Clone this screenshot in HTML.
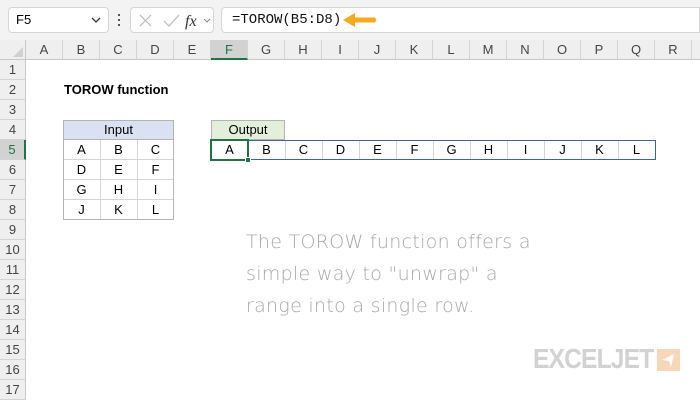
<!DOCTYPE html>
<html><head><meta charset="utf-8"><style>
*{margin:0;padding:0;box-sizing:border-box}
body{width:700px;height:400px;overflow:hidden;background:#fff;font-family:"Liberation Sans",sans-serif;position:relative}
.a{position:absolute}
.hdr{position:absolute;top:40px;height:20px;background:#efefef;border-right:1px solid #d4d4d4;border-bottom:1px solid #c8c8c8;font-size:13px;color:#444;text-align:center;line-height:20px}
.rh{position:absolute;left:0;width:26px;height:20px;background:#efefef;border-bottom:1px solid #d4d4d4;border-right:1px solid #c8c8c8;font-size:13px;color:#444;text-align:center;line-height:20px}
.c{position:absolute;height:20px;width:37px;font-size:13px;text-align:center;line-height:20px;color:#000}
</style></head><body>
<div class="a" style="left:0;top:0;width:700px;height:40px;background:#f3f3f3"></div>
<div class="a" style="left:8px;top:7px;width:101px;height:26px;background:#fff;border:1px solid #d6d6d6;border-radius:4px;font-size:13px;line-height:24px;padding-left:7px">F5</div>
<svg class="a" style="left:90px;top:15px" width="12" height="10"><path d="M2 3 L6 7 L10 3" stroke="#333" stroke-width="1.3" fill="none"/></svg>
<div class="a" style="left:118px;top:14px;width:2px;height:2px;background:#555;box-shadow:0 5px 0 #555,0 10px 0 #555"></div>
<div class="a" style="left:130px;top:7px;width:84px;height:26px;background:#fff;border:1px solid #d6d6d6;border-radius:4px"></div>
<svg class="a" style="left:136px;top:12px" width="80" height="18"><path d="M4 3 L15 14 M15 3 L4 14" stroke="#bbb" stroke-width="1.2"/><path d="M28 9 L33 14 L43 3" stroke="#bbb" stroke-width="1.2" fill="none"/><text x="49" y="14" font-family="Liberation Serif" font-style="italic" font-size="16" fill="#333">fx</text><path d="M68 7 L71 10 L74 7" stroke="#888" fill="none"/></svg>
<div class="a" style="left:221px;top:7px;width:479px;height:26px;background:#fff;border:1px solid #d6d6d6;border-radius:4px 0 0 4px;font-family:'Liberation Mono',monospace;font-size:14px;line-height:24px;padding-left:10px;color:#111">=TOROW(B5:D8)</div>
<svg class="a" style="left:340px;top:10px" width="40" height="20"><path d="M3 10 L15 3 L15 7.5 L35 7.5 Q37 10 35 12.5 L15 12.5 L15 17 Z" fill="#f5a91b"/></svg>
<div class="a" style="left:0;top:40px;width:26px;height:20px;background:#efefef;border-right:1px solid #c8c8c8;border-bottom:1px solid #c8c8c8"></div>
<svg class="a" style="left:10px;top:46px" width="14" height="12"><path d="M13 1 L13 11 L3 11 Z" fill="#d0d0d0"/></svg>
<div id="cols"></div>
<div class="a" style="left:26px;top:60px;width:674px;height:340px;background:#fff"></div>
<div class="a" style="left:64px;top:80px;font-size:13px;font-weight:bold;line-height:20px">TOROW function</div>
<div class="a" style="left:63px;top:120px;width:111px;height:20px;background:#dae1f3;border:1px solid #b4b4b4;text-align:center;font-size:13px;line-height:18px">Input</div>
<div class="a" style="left:211px;top:120px;width:74px;height:20px;background:#e3efda;border:1px solid #b4b4b4;text-align:center;font-size:13px;line-height:18px">Output</div>
<div class="a" style="left:63px;top:139px;width:111px;height:81px;border:1px solid #b4b4b4;background:linear-gradient(#d4d4d4,#d4d4d4) 36px 0/1px 100% no-repeat,linear-gradient(#d4d4d4,#d4d4d4) 73px 0/1px 100% no-repeat,repeating-linear-gradient(#fff 0 19px,#d4d4d4 19px 20px)"></div>
<div class="a" style="left:211px;top:140px;width:445px;height:20px;border:1px solid #3a63a8;background:repeating-linear-gradient(90deg,#fff 0 36px,#d4d4d4 36px 37px)"></div>
<div class="a" style="left:210px;top:139px;width:39px;height:22px;border:2px solid #217346"></div>
<div class="a" style="left:245px;top:157px;width:6px;height:6px;background:#217346;border:1px solid #fff"></div>
<div id="cells"></div>
<div class="a" style="left:246px;top:226px;font-family:'Comic Sans MS','DejaVu Sans',sans-serif;font-size:19px;line-height:32px;color:#a8a8a8;font-weight:300;letter-spacing:0.3px">The TOROW function offers a<br>simple way to "unwrap" a<br>range into a single row.</div>
<div class="a" style="left:533px;top:343px;font-size:28px;font-weight:bold;color:#d2d2d2;letter-spacing:-1px;transform:scaleX(0.88);transform-origin:left">EXCELJET</div>
<svg class="a" style="left:657px;top:349px" width="23" height="22"><rect width="23" height="22" fill="#f8d6b8"/><path d="M5 11 L17 5 L14 18 L12 12 Z" fill="#fff"/></svg>
<script>
var L="ABCDEFGHIJKLMNOPQRS",h="";
for(var i=0;i<19;i++){var x=26+37*i;h+='<div class="hdr" style="left:'+x+'px;width:37px;'+(i==5?'background:#d2d2d2;border-bottom:2px solid #217346;color:#217346;':'')+'">'+L[i]+'</div>';}
for(var r=1;r<=17;r++){h+='<div class="rh" style="top:'+(40+20*r)+'px;'+(r==5?'background:#d2d2d2;border-right:2px solid #217346;color:#217346;':'')+'">'+r+'</div>';}
document.getElementById('cols').outerHTML=h;
var c="",g="ABCDEFGHIJKL";
for(var k=0;k<12;k++){c+='<div class="c" style="left:'+(211+37*k)+'px;top:140px">'+g[k]+'</div>';
c+='<div class="c" style="left:'+(63+37*(k%3))+'px;top:'+(140+20*Math.floor(k/3))+'px">'+g[k]+'</div>';}
document.getElementById('cells').outerHTML=c;
</script>
</body></html>
